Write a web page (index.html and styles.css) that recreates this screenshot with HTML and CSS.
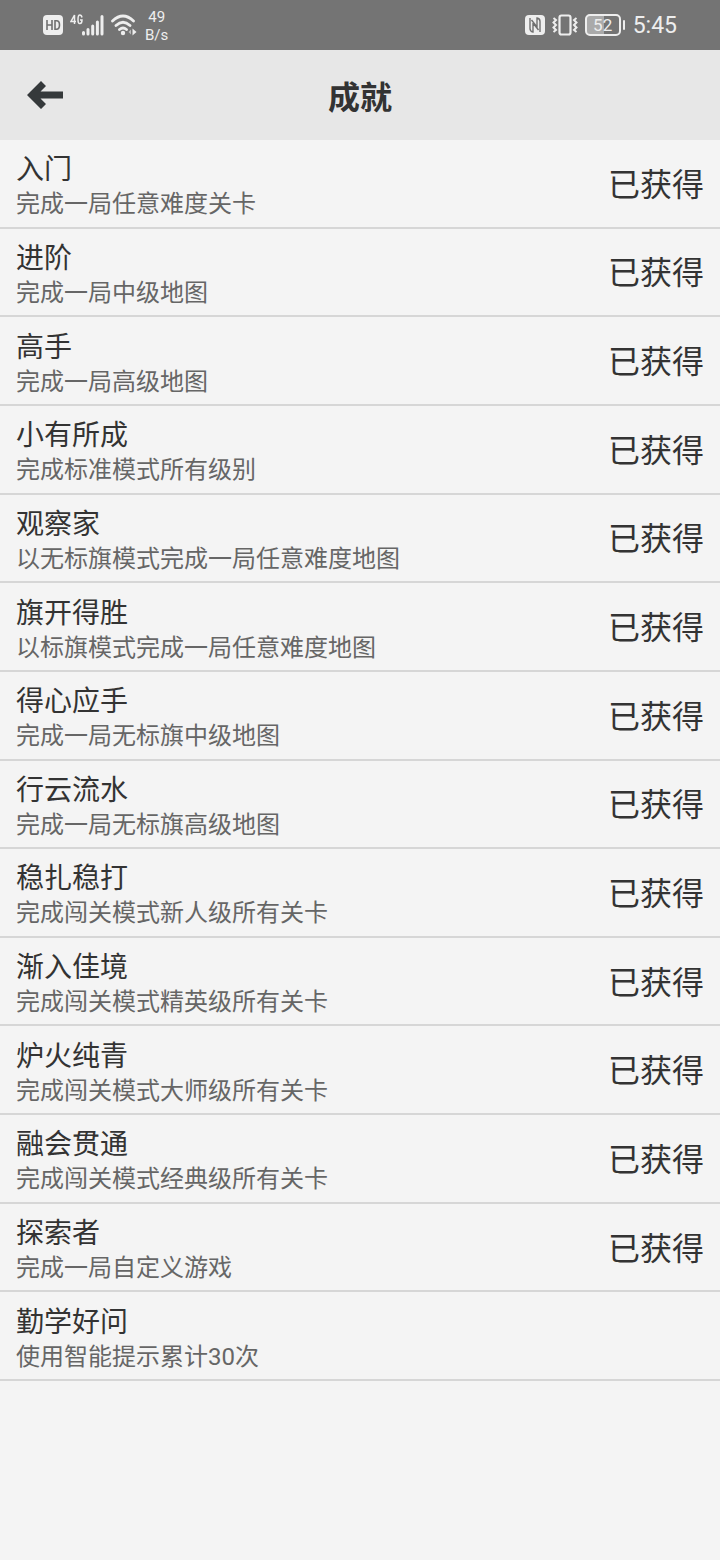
FILE: index.html
```html
<!DOCTYPE html>
<html lang="zh-CN">
<head>
  <meta charset="UTF-8" />
  <meta name="viewport" content="width=device-width, initial-scale=1.0"/>
  <title>成就</title>
  <link rel="stylesheet" href="styles.css">
</head>
<body>
  <div class="status-bar">
    <div class="status-left">
      <svg class="icon-hd" width="20" height="20" viewBox="0 0 20 20">
        <rect width="20" height="20" rx="4" fill="#eee"/>
        <path d="M4 5v10M9 5v10M4 10h5M12 5.800v8.400h1.500q3 0 3-4.200t-3-4.200z" fill="none" stroke="#707070" stroke-width="1.600"/>
      </svg>
      <svg class="icon-signal" width="34" height="22" viewBox="0 0 34 22">
        <path d="M4.500 10V1L1 7.500h5M12 3.500Q11.500 1 9.800 1 8 1 8 5.500T10 9.500q2 0 2-3.500h-2" fill="none" stroke="#eee" stroke-width="1.500"/>
        <path d="M13.500 20v-1.500M18 20v-4.500M22.700 20v-8M27.400 20V8M32 20V2.500" stroke="#eee" stroke-width="3" stroke-linecap="round"/>
      </svg>
      <svg class="icon-wifi" width="26" height="22" viewBox="0 0 26 22">
        <g fill="none" stroke="#eee" stroke-width="2.800" stroke-linecap="round">
          <path d="M1.500 7Q12-3 22.500 7M5 11.500q7-6.500 14 0M8.500 15.500q3.500-3 7 0"/>
        </g>
        <circle cx="12" cy="19" r="2.200" fill="#eee"/>
        <path d="M20 15.500v5l-2.500-2.500z" fill="#bbb"/>
        <path d="M21.500 14.500v7l4-3.500z" fill="#eee"/>
      </svg>
      <div class="speed">
        <span>49</span>
        <span>B/s</span>
      </div>
    </div>
    <div class="status-right">
      <svg width="20" height="20" viewBox="0 0 20 20">
        <rect width="20" height="20" rx="4" fill="#eee"/>
        <path d="M5 3v10.500q0 3 3 3.500V8l5.500 7M15 17V6.500q0-3-3-3.500v9L6.500 5" fill="none" stroke="#707070" stroke-width="1.400"/>
      </svg>
      <svg width="26" height="22" viewBox="0 0 26 22">
        <rect x="7.500" y="1.500" width="11" height="19" rx="2" fill="none" stroke="#eee" stroke-width="2.200"/>
        <path d="M1.500 4l2.500 2-2.500 2.500L4 11l-2.500 2.500L4 16l-2.500 2M24.500 4L22 6l2.500 2.500L22 11l2.500 2.500L22 16l2.500 2" fill="none" stroke="#eee" stroke-width="2"/>
      </svg>
      <div class="battery">52</div>
      <span class="time">5:45</span>
    </div>
  </div>

  <header class="header">
    <button type="button" class="back" aria-label="返回">
      <svg width="36" height="28" viewBox="0 0 36 28">
        <path d="M0 14L14 0l5 5-5.500 5.500H36v7H13.500L19 23l-5 5z" fill="#35393b"/>
      </svg>
    </button>
    <h1>成就</h1>
  </header>

  <ul class="list">
    <li>
      <div class="info"><h2>入门</h2><p>完成一局任意难度关卡</p></div>
      <span class="state">已获得</span>
    </li>
    <li>
      <div class="info"><h2>进阶</h2><p>完成一局中级地图</p></div>
      <span class="state">已获得</span>
    </li>
    <li>
      <div class="info"><h2>高手</h2><p>完成一局高级地图</p></div>
      <span class="state">已获得</span>
    </li>
    <li>
      <div class="info"><h2>小有所成</h2><p>完成标准模式所有级别</p></div>
      <span class="state">已获得</span>
    </li>
    <li>
      <div class="info"><h2>观察家</h2><p>以无标旗模式完成一局任意难度地图</p></div>
      <span class="state">已获得</span>
    </li>
    <li>
      <div class="info"><h2>旗开得胜</h2><p>以标旗模式完成一局任意难度地图</p></div>
      <span class="state">已获得</span>
    </li>
    <li>
      <div class="info"><h2>得心应手</h2><p>完成一局无标旗中级地图</p></div>
      <span class="state">已获得</span>
    </li>
    <li>
      <div class="info"><h2>行云流水</h2><p>完成一局无标旗高级地图</p></div>
      <span class="state">已获得</span>
    </li>
    <li>
      <div class="info"><h2>稳扎稳打</h2><p>完成闯关模式新人级所有关卡</p></div>
      <span class="state">已获得</span>
    </li>
    <li>
      <div class="info"><h2>渐入佳境</h2><p>完成闯关模式精英级所有关卡</p></div>
      <span class="state">已获得</span>
    </li>
    <li>
      <div class="info"><h2>炉火纯青</h2><p>完成闯关模式大师级所有关卡</p></div>
      <span class="state">已获得</span>
    </li>
    <li>
      <div class="info"><h2>融会贯通</h2><p>完成闯关模式经典级所有关卡</p></div>
      <span class="state">已获得</span>
    </li>
    <li>
      <div class="info"><h2>探索者</h2><p>完成一局自定义游戏</p></div>
      <span class="state">已获得</span>
    </li>
    <li>
      <div class="info"><h2>勤学好问</h2><p>使用智能提示累计30次</p></div>
    </li>
  </ul>
</body>
</html>
```
FILE: styles.css
```css
* {
  box-sizing: border-box;
}
body {
  margin: 0;
  background: #f4f4f4;
  color: #333;
  font-family: Roboto, "Noto Sans CJK SC", sans-serif;
}
h1, h2, p {
  margin: 0;
}
.status-bar {
  display: flex;
  justify-content: space-between;
  align-items: center;
  height: 50px;
  padding: 0 43px;
  background: #747474;
  color: #eee;
}
.status-left, .status-right {
  display: flex;
  align-items: center;
  gap: 7px;
}
.speed {
  display: flex;
  flex-direction: column;
  align-items: center;
  padding: 2px 0 0 1px;
  font-size: 15px;
  line-height: 18px;
}
.battery {
  position: relative;
  width: 36px;
  height: 22px;
  border: 2px solid #eee;
  border-radius: 5px;
  background: linear-gradient(90deg, #aaa 52%, transparent 52%);
  font-size: 17px;
  line-height: 18px;
  text-align: center;
}
.battery::after {
  content: "";
  position: absolute;
  top: 4px;
  right: -6px;
  width: 2px;
  height: 10px;
  border-radius: 1px;
  background: #eee;
}
.time {
  margin-left: 5px;
  padding-top: 2px;
  font-size: 23px;
  line-height: 28px;
}
.header {
  display: grid;
  grid-template-columns: 1fr auto 1fr;
  align-items: center;
  height: 90px;
  padding: 0 16px;
  background: #e7e7e7;
}
.header h1 {
  font-family: "Noto Sans CJK SC", sans-serif;
  font-size: 32px;
  line-height: 48px;
}
.back {
  justify-self: start;
  display: flex;
  padding: 11px;
  border: none;
  background: none;
  cursor: pointer;
}
.list {
  display: grid;
  grid-auto-rows: 1fr;
  min-height: 1241px;
  margin: 0;
  padding: 0;
  list-style: none;
}
.list li {
  display: flex;
  justify-content: space-between;
  align-items: center;
  padding: 0 16px;
  border-bottom: 2px solid #d6d6d6;
}
.info {
  padding-top: 8px;
}
.info h2 {
  font-size: 28px;
  font-weight: 400;
  line-height: 34px;
}
.info p {
  color: #666;
  font-size: 24px;
  line-height: 34px;
}
.state {
  padding-top: 3px;
  font-size: 32px;
  line-height: 48px;
}
```
